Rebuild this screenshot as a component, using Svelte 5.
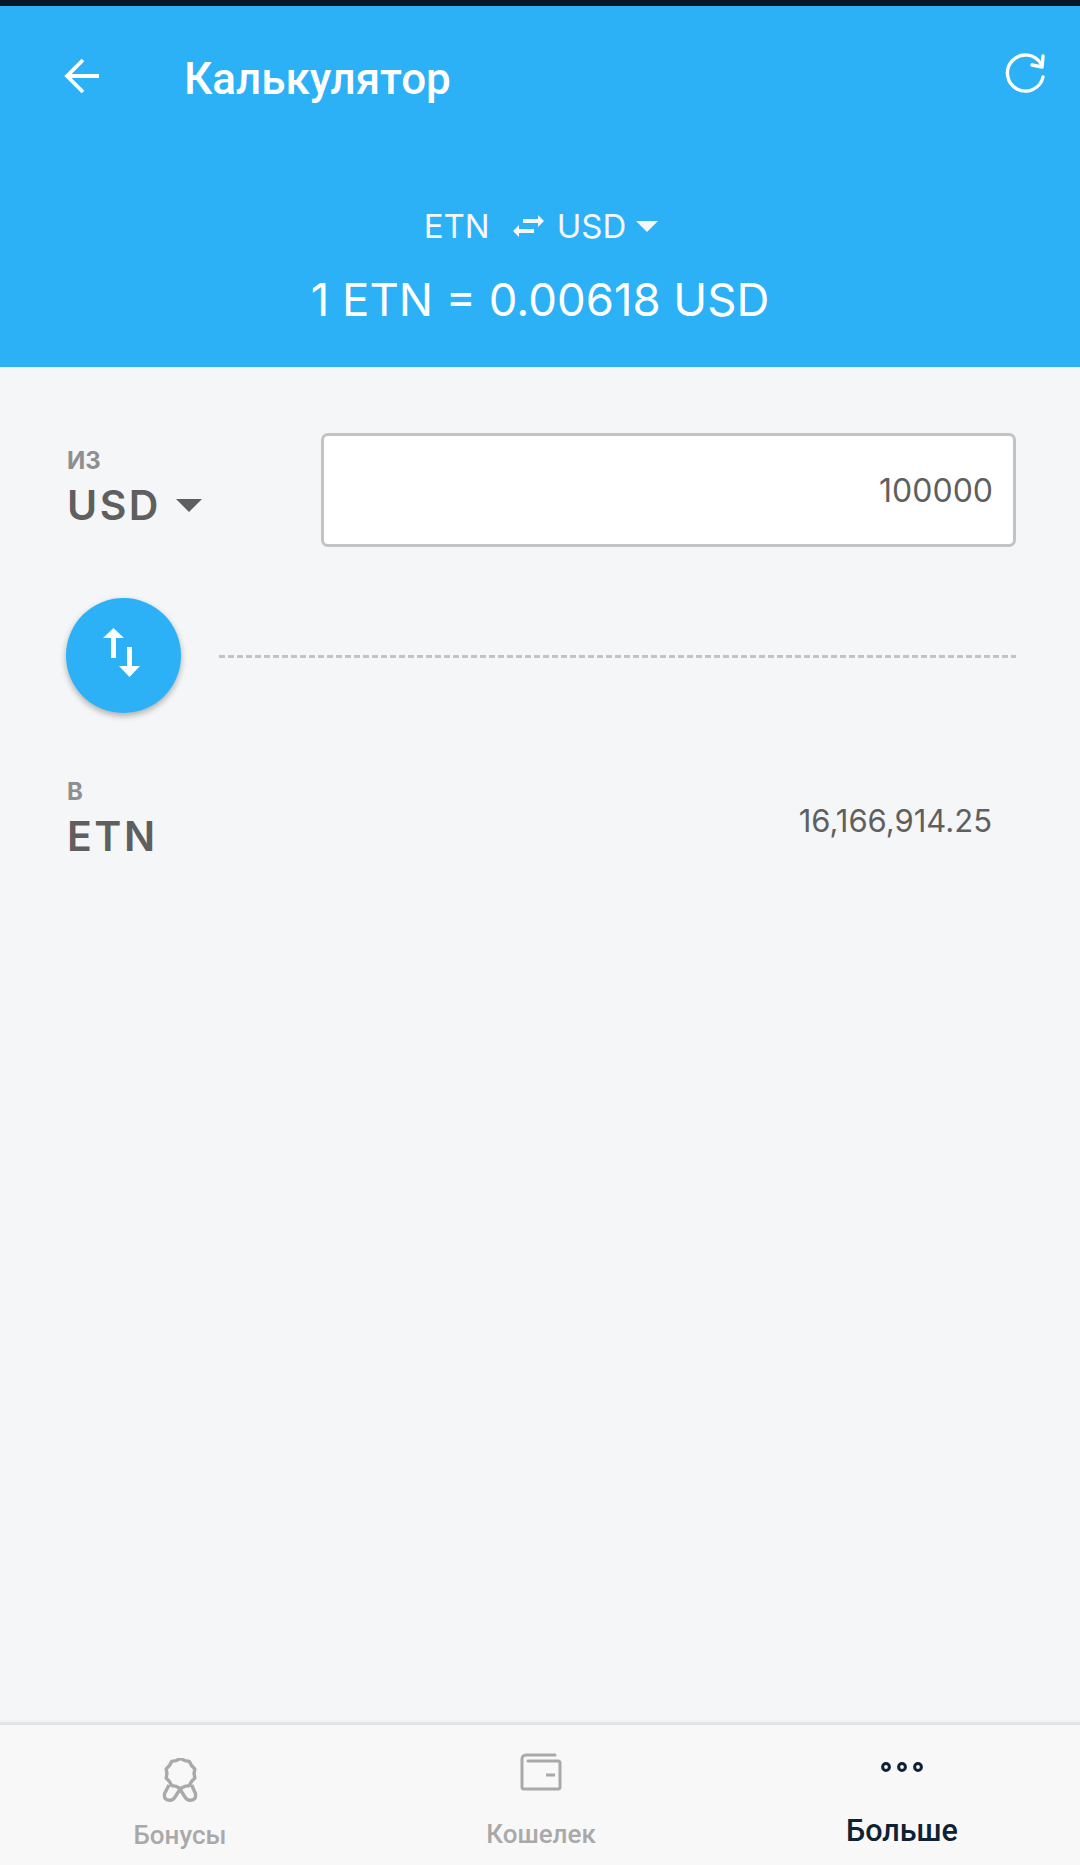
<script>
  const from = { label: 'ИЗ', code: 'USD', amount: '100000' }
  const to = { label: 'В', code: 'ETN', amount: '16,166,914.25' }

  // scalloped edge of the medal icon
  const medal = Array.from({ length: 20 }, (_, i) => {
    const a = (i * Math.PI) / 10
    const r = i % 2 ? 13.6 : 15
    return `${(18.5 + r * Math.sin(a)).toFixed(1)},${(15.5 - r * Math.cos(a)).toFixed(1)}`
  }).join(' ')
</script>

<div class="page">
  <div class="status"></div>

  <header class="head">
    <div class="toolbar">
      <svg class="back" width="36" height="36" viewBox="0 0 36 36">
        <path d="M35 18H3M19 2L3 18l16 16" fill="none" stroke="#fff" stroke-width="3.8" />
      </svg>
      <h1>Калькулятор</h1>
      <svg class="refresh" width="42" height="44" viewBox="0 0 42 44">
        <path d="M37 13A18 18 0 1 0 39 26" fill="none" stroke="#fff" stroke-width="3.4" stroke-linecap="round" />
        <path d="M39 5L38 16L28 14" fill="none" stroke="#fff" stroke-width="3.4" stroke-linecap="round" stroke-linejoin="round" />
      </svg>
    </div>

    <div class="pair">
      <span>ETN</span>
      <svg class="swap" width="32" height="24" viewBox="0 0 32 24">
        <path d="M0 17l6-6v4h15v4H6v4z M31 7l-6 6V9H10V5h15V1z" fill="#f4f6f8" />
      </svg>
      <span>USD</span>
      <i class="caret light"></i>
    </div>
    <div class="rate">1 ETN = 0.00618 USD</div>
  </header>

  <main class="body">
    <section class="row from">
      <div class="cur">
        <div class="label">{from.label}</div>
        <div class="code">{from.code}<i class="caret dark"></i></div>
      </div>
      <div class="input">{from.amount}</div>
    </section>

    <section class="divider">
      <button class="fab" aria-label="swap">
        <svg width="37" height="49" viewBox="0 0 37 49">
          <path d="M10.5 0L21 10h-8v20H8V10H0z M26.5 49L16 38h8V19h5v19h8z" fill="#fff" />
        </svg>
      </button>
      <div class="dash"></div>
    </section>

    <section class="row to">
      <div class="cur">
        <div class="label">{to.label}</div>
        <div class="code">{to.code}</div>
      </div>
      <div class="result">{to.amount}</div>
    </section>
  </main>

  <nav class="tabs">
    <div class="tab bonus">
      <svg width="36" height="44" viewBox="0 0 36 44">
        <polygon points={medal} fill="none" stroke="#a9a9a9" stroke-width="3.4" stroke-linejoin="round" />
        <path d="M7 27L2.6 35.5Q1.4 42.3 7.5 42.3Q11 42.6 13 39L18 31.3L23 39Q25 42.6 28.5 42.3Q34.6 42.3 33.4 35.5L29.7 27" fill="none" stroke="#a9a9a9" stroke-width="3.4" stroke-linejoin="round" />
      </svg>
      <span>Бонусы</span>
    </div>
    <div class="tab wallet">
      <svg width="42" height="38" viewBox="0 0 42 38">
        <path d="M35 2H6a4 4 0 0 0-4 4v28a2 2 0 0 0 2 2h34a2 2 0 0 0 2-2V10a2 2 0 0 0-2-2H8" fill="none" stroke="#a9a9a9" stroke-width="3" stroke-linecap="round" />
        <path d="M26 22h9" fill="none" stroke="#a9a9a9" stroke-width="3" />
      </svg>
      <span>Кошелек</span>
    </div>
    <div class="tab more active">
      <svg width="44" height="12" viewBox="0 0 44 12">
        <circle cx="6" cy="6" r="3.4" fill="none" stroke="#0d2234" stroke-width="3" />
        <circle cx="22" cy="6" r="3.4" fill="none" stroke="#0d2234" stroke-width="3" />
        <circle cx="38" cy="6" r="3.4" fill="none" stroke="#0d2234" stroke-width="3" />
      </svg>
      <span>Больше</span>
    </div>
  </nav>
</div>

<style>
  :global(body) {
    margin: 0;
  }

  .page {
    width: 1080px;
    height: 1865px;
    display: flex;
    flex-direction: column;
    background: #f4f6f8;
    font-family: Inter, "Noto Sans", sans-serif;
    overflow: hidden;
  }

  .status {
    height: 6px;
    background: #04182a;
  }

  .head {
    height: 361px;
    background: #2cb1f6;
    color: #fff;
    display: flex;
    flex-direction: column;
  }

  .toolbar {
    display: flex;
    align-items: center;
    height: 44px;
    margin-top: 50px;
    padding: 0 34px 0 64px;
  }

  .back {
    flex: none;
    margin-bottom: 4px;
  }

  h1 {
    flex: 1;
    margin: 2px 0 0 84px;
    font: 500 44px/44px Roboto, sans-serif;
  }

  .refresh {
    flex: none;
    margin-bottom: 10px;
  }

  .pair {
    display: flex;
    justify-content: center;
    align-items: center;
    margin-top: 104px;
    padding-left: 2px;
    height: 44px;
    font-size: 33px;
    color: #f4f6f8;
  }

  .swap {
    margin: 0 12px 0 23px;
  }

  .caret {
    display: block;
    width: 0;
    height: 0;
    border-left: 11px solid transparent;
    border-right: 11px solid transparent;
  }

  .caret.light {
    border-top: 11px solid #f4f6f8;
    margin-left: 10px;
  }

  .rate {
    margin-top: 24px;
    text-align: center;
    font-size: 45.5px;
    line-height: 56px;
  }

  .body {
    flex: 1;
    display: flex;
    flex-direction: column;
    padding: 66px 64px 0 67px;
    color: #5f5f5f;
  }

  .row {
    display: flex;
    justify-content: space-between;
  }

  .label {
    font-size: 24px;
    line-height: 28px;
    font-weight: 700;
    color: #8f8f8f;
  }

  .code {
    display: flex;
    align-items: center;
    font-size: 41px;
    line-height: 48px;
    font-weight: 600;
    letter-spacing: 2.5px;
    margin-top: 6px;
  }

  .caret.dark {
    border-left-width: 13px;
    border-right-width: 13px;
    border-top: 13px solid #5f5f5f;
    margin-left: 15px;
  }

  .from .cur {
    padding-top: 14px;
  }

  .input {
    box-sizing: border-box;
    width: 695px;
    height: 114px;
    background: #fff;
    border: 3px solid #c3c3c3;
    border-radius: 7px;
    padding-right: 20px;
    display: flex;
    align-items: center;
    justify-content: flex-end;
    font-size: 32px;
  }

  .divider {
    display: flex;
    align-items: center;
    margin-top: 51px;
    margin-left: -1px;
  }

  .fab {
    width: 115px;
    height: 115px;
    flex: none;
    border: 0;
    padding: 0 4px 6px 0;
    border-radius: 50%;
    background: #2cb1f6;
    box-shadow: 0 3px 6px rgba(0, 0, 0, 0.3);
    display: flex;
    align-items: center;
    justify-content: center;
  }

  .dash {
    flex: 1;
    margin: 2px 0 0 38px;
    height: 3px;
    background: repeating-linear-gradient(90deg, #c3c3c3 0 6px, transparent 6px 9px);
  }

  .to {
    margin-top: 65px;
  }

  .result {
    font-size: 31px;
    line-height: 40px;
    padding: 23px 24px 0 0;
  }

  .tabs {
    height: 140px;
    flex: none;
    display: grid;
    grid-template-columns: repeat(3, 1fr);
    background: #f8f8f8;
    border-top: 3px solid #e2e3e5;
    box-shadow: 0 -2px 2px rgba(0, 0, 0, 0.02);
  }

  .tab {
    display: flex;
    flex-direction: column;
    align-items: center;
    font: 500 26px/30px Roboto, sans-serif;
    color: #a9a9a9;
  }

  .bonus {
    padding-top: 33px;
  }

  .bonus span {
    margin-top: 18px;
  }

  .wallet {
    padding: 28px 0 0 2px;
  }

  .wallet span {
    margin-top: 28px;
  }

  .more {
    padding: 36px 0 0 4px;
    color: #0d2234;
  }

  .more span {
    margin-top: 43px;
    font-size: 30.5px;
  }
</style>
